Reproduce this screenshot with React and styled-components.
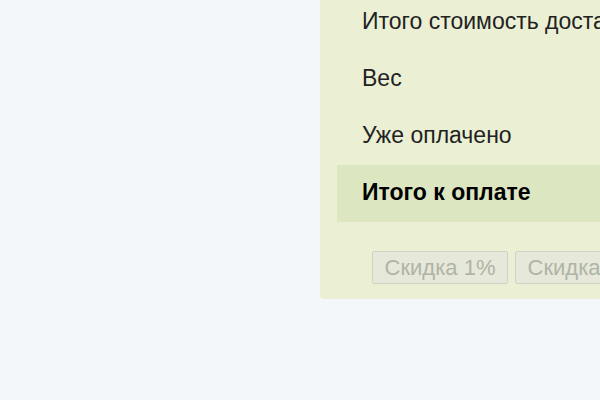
import styled, { createGlobalStyle } from 'styled-components'

const GlobalStyle = createGlobalStyle`
  html, body {
    margin: 0;
    padding: 0;
    background: #f4f7fa;
    overflow: hidden;
    font-family: "Liberation Sans", Arial, sans-serif;
  }
`

const Page = styled.div`
  width: 600px;
  height: 400px;
  overflow: hidden;
`

const Panel = styled.div`
  margin: -6px 0 0 320px;
  width: 520px;
  padding: 0 0 15px 17px;
  background: #ebf0d4;
  border-radius: 4px;
`

const Row = styled.div`
  height: 57px;
  box-sizing: border-box;
  padding: 0 0 3px 25px;
  display: flex;
  align-items: center;
  font-size: 23px;
  white-space: nowrap;
  background: ${p => (p.$total ? '#dce6c0' : 'transparent')};
  font-weight: ${p => (p.$total ? 'bold' : 'normal')};
  color: ${p => (p.$total ? '#000' : '#222')};
`

const Discounts = styled.div`
  display: flex;
  gap: 7px;
  padding: 29px 0 0 35px;
`

const DiscountBtn = styled.button`
  width: 136px;
  height: 33px;
  padding: 0;
  flex-shrink: 0;
  font-family: "Liberation Sans", Arial, sans-serif;
  font-size: 22px;
  color: #b0b3a8;
  background: #e6e9d9;
  border: 1px solid #cfd2c4;
  border-radius: 2px;
  white-space: nowrap;
`

export default function App() {
  return (
    <Page>
      <GlobalStyle />
      <Panel>
        <Row>Итого стоимость доставки</Row>
        <Row>Вес</Row>
        <Row>Уже оплачено</Row>
        <Row $total>Итого к оплате</Row>
        <Discounts>
          <DiscountBtn disabled>Скидка 1%</DiscountBtn>
          <DiscountBtn disabled>Скидка 2%</DiscountBtn>
        </Discounts>
      </Panel>
    </Page>
  )
}
